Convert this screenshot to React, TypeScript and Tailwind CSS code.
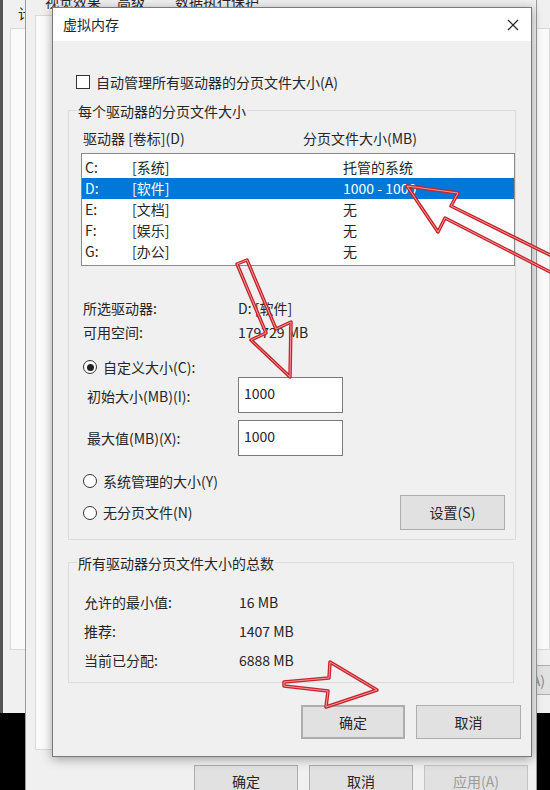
import type { ReactNode } from "react";

const drives = [
  { letter: "C:", label: "[系统]", size: "托管的系统" },
  { letter: "D:", label: "[软件]", size: "1000 - 1000" },
  { letter: "E:", label: "[文档]", size: "无" },
  { letter: "F:", label: "[娱乐]", size: "无" },
  { letter: "G:", label: "[办公]", size: "无" },
];

const totals = [
  { label: "允许的最小值:", value: "16 MB" },
  { label: "推荐:", value: "1407 MB" },
  { label: "当前已分配:", value: "6888 MB" },
];

function Radio({ checked = false }: { checked?: boolean }) {
  return (
    <span className="flex h-[14px] w-[14px] items-center justify-center rounded-full border border-[#333] bg-white">
      {checked && <span className="h-[7px] w-[7px] rounded-full bg-[#222]" />}
    </span>
  );
}

function GroupBox({ label, children, className = "" }: { label: string; children: ReactNode; className?: string }) {
  return (
    <div className={`border border-[#dcdcdc] ${className}`}>
      <div className="-mt-[10px] ml-[8px] w-fit bg-[#f0f0f0] px-[1px] leading-[20px]">{label}</div>
      {children}
    </div>
  );
}

function WinButton({ children, className = "" }: { children: ReactNode; className?: string }) {
  return (
    <div className={`flex items-center justify-center border border-[#adadad] bg-[#e1e1e1] ${className}`}>
      {children}
    </div>
  );
}

function Arrows() {
  const shapes = [
    "407,186 458,193 451,206 560,260 560,277 445,218 438,232",
    "237,264 247,260 276,329 291,322 290,377 251,340 266,333",
    "284,682 329,678 330,662 377,690 326,707 328,691 284,686",
  ];
  return (
    <svg className="pointer-events-none absolute left-0 top-0" width="550" height="790" viewBox="0 0 550 790">
      {shapes.map((p, i) => (
        <g key={i}>
          <polygon points={p} fill="none" stroke="#c8232b" strokeWidth="3.5" strokeLinejoin="round" />
          <polygon points={p} fill="none" stroke="#ef9a9a" strokeWidth="1" strokeLinejoin="round" />
        </g>
      ))}
    </svg>
  );
}

export default function App() {
  return (
    <div className="relative h-[790px] w-[550px] overflow-hidden bg-black font-['Noto_Sans_CJK_SC',sans-serif] text-[14px] text-[#262626]">
      {/* System properties window (far back) */}
      <div className="absolute left-0 top-[-20px] flex h-[733px] w-[580px] flex-col border-l-[3px] border-[#555] bg-[#f0f0f0]">
        <div className="ml-[15px] mt-[23px] h-[20px] leading-[20px]">计算机名</div>
        <div className="ml-[7px] mt-[5px] h-[622px] w-[540px] border border-[#d9d9d9] bg-[#fafafa]" />
        <WinButton className="ml-[467px] mt-[15px] h-[30px] w-[104px] bg-[#d6d6d6] text-[#8a8a8a]">应用(A)</WinButton>
      </div>

      {/* Performance options window */}
      <div className="absolute left-[25px] top-[-12px] flex h-[815px] w-[512px] flex-col border-x border-[#9a9a9a] bg-[#f0f0f0]">
        <div className="flex h-[27px] items-center pl-[19px]">
          <span>视觉效果</span>
          <span className="ml-[16px]">高级</span>
          <span className="ml-[30px]">数据执行保护</span>
        </div>
        <div className="ml-[9px] h-[735px] w-[492px] border border-[#d9d9d9] bg-[#fbfbfb]" />
        <div className="mt-[15px] flex justify-end gap-[11px] pr-[8px]">
          <WinButton className="h-[32px] w-[104px]">确定</WinButton>
          <WinButton className="h-[32px] w-[104px]">取消</WinButton>
          <WinButton className="h-[32px] w-[104px] border-[#c4c4c4] bg-[#d3d3d3] text-[#9c9c9c]">应用(A)</WinButton>
        </div>
      </div>

      {/* Virtual memory dialog */}
      <div className="absolute left-[52px] top-[7px] flex h-[750px] w-[480px] flex-col border border-[#7a7a7a] bg-[#f0f0f0] shadow-[0_2px_10px_rgba(0,0,0,0.35)]">
        <div className="flex h-[33px] items-center justify-between bg-white pl-[10px] pr-[12px]">
          <span>虚拟内存</span>
          <svg width="12" height="12" viewBox="0 0 12 12">
            <path d="M1 1 L11 11 M11 1 L1 11" stroke="#222" strokeWidth="1.2" />
          </svg>
        </div>

        <div className="flex flex-1 flex-col pl-[15px]">
          <div className="ml-[8px] mt-[31px] flex h-[20px] items-center gap-[6px]">
            <span className="h-[14px] w-[14px] border border-[#333] bg-white" />
            <span>自动管理所有驱动器的分页文件大小(A)</span>
          </div>

          <GroupBox label="每个驱动器的分页文件大小" className="mt-[18px] w-[448px]">
            <div className="pb-[9px] pl-[12px]">
              <div className="mt-[7px] flex h-[20px] items-center pl-[2px]">
                <span className="w-[220px]">驱动器 [卷标](D)</span>
                <span>分页文件大小(MB)</span>
              </div>

              <div className="mt-[5px] w-[434px] border border-[#8a8a8a] bg-white py-[3px]">
                {drives.map((d) => (
                  <div
                    key={d.letter}
                    className={`flex h-[21px] items-center pl-[3px] ${d.letter === "D:" ? "bg-[#0078d7] text-white" : ""}`}
                  >
                    <span className="w-[47px]">{d.letter}</span>
                    <span className="w-[211px]">{d.label}</span>
                    <span>{d.size}</span>
                  </div>
                ))}
              </div>

              <div className="mt-[32px] flex h-[20px] items-center pl-[2px]">
                <span className="w-[155px]">所选驱动器:</span>
                <span>D: [软件]</span>
              </div>
              <div className="mt-[4px] flex h-[20px] items-center pl-[2px]">
                <span className="w-[155px]">可用空间:</span>
                <span>179729 MB</span>
              </div>

              <div className="mt-[15px] flex h-[20px] items-center gap-[6px] pl-[2px]">
                <Radio checked />
                <span>自定义大小(C):</span>
              </div>

              <div className="flex items-center pl-[6px]">
                <span className="w-[151px] pt-[3px]">初始大小(MB)(I):</span>
                <div className="h-[36px] w-[105px] border border-[#7a7a7a] bg-white pl-[5px] pt-[5px] leading-[20px]">1000</div>
              </div>
              <div className="mt-[7px] flex items-center pl-[6px]">
                <span className="w-[151px]">最大值(MB)(X):</span>
                <div className="h-[36px] w-[105px] border border-[#7a7a7a] bg-white pl-[5px] pt-[5px] leading-[20px]">1000</div>
              </div>

              <div className="mt-[15px] flex h-[20px] items-center gap-[6px] pl-[2px]">
                <Radio />
                <span>系统管理的大小(Y)</span>
              </div>
              <div className="mt-[4px] flex items-center justify-between pl-[2px] pr-[10px]">
                <div className="flex items-center gap-[6px]">
                  <Radio />
                  <span>无分页文件(N)</span>
                </div>
                <WinButton className="h-[35px] w-[105px]">设置(S)</WinButton>
              </div>
            </div>
          </GroupBox>

          <GroupBox label="所有驱动器分页文件大小的总数" className="mt-[22px] w-[446px]">
            <div className="flex flex-col gap-[9px] pb-[12px] pl-[15px] pt-[19px]">
              {totals.map((t) => (
                <div key={t.label} className="flex h-[20px] items-center">
                  <span className="w-[155px]">{t.label}</span>
                  <span>{t.value}</span>
                </div>
              ))}
            </div>
          </GroupBox>

          <div className="mt-[22px] flex justify-end gap-[11px] pr-[10px]">
            <WinButton className="h-[34px] w-[104px] border-2 border-[#0078d7]">确定</WinButton>
            <WinButton className="h-[34px] w-[105px]">取消</WinButton>
          </div>
        </div>
      </div>

      <Arrows />
    </div>
  );
}
